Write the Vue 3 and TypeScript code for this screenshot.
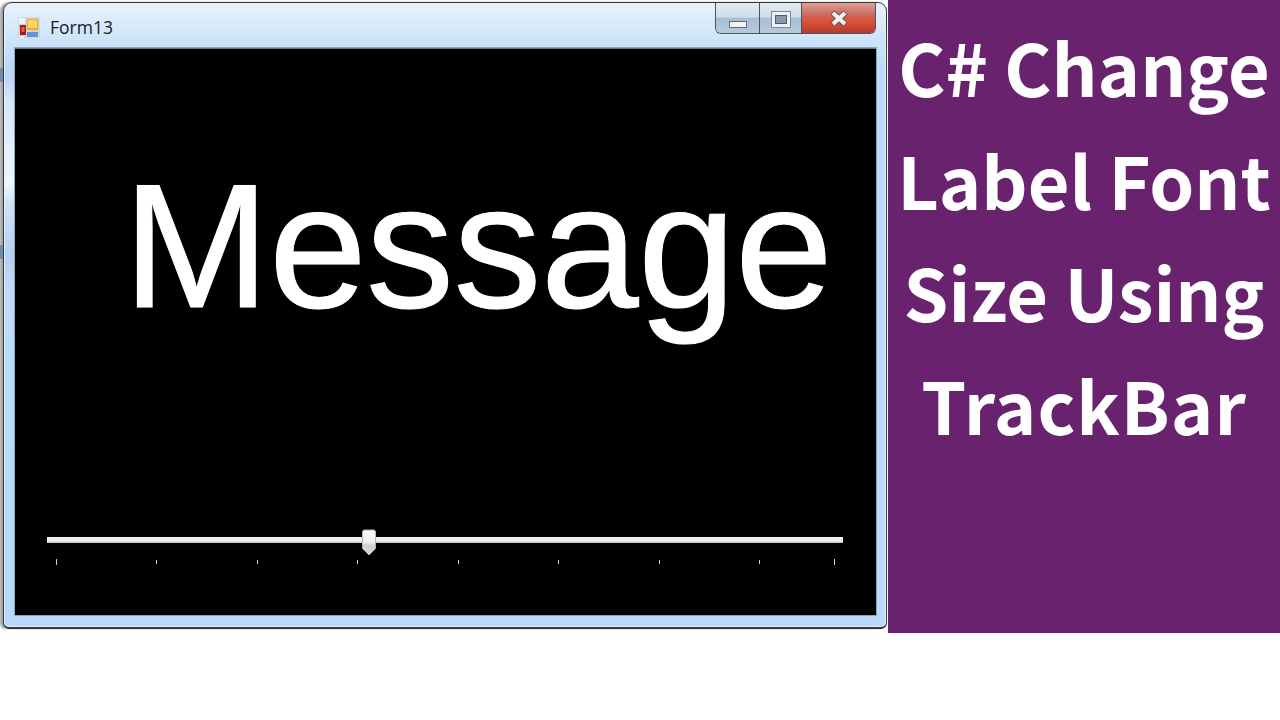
<script setup lang="ts">
const ticks: number[] = [0, 1, 2, 3, 4, 5, 6, 7]
const lines: string[] = ['C# Change', 'Label Font', 'Size Using', 'TrackBar']
</script>

<template>
  <div class="page">
    <span class="desk-bit bit-a"></span>
    <span class="desk-bit bit-b"></span>
    <div class="window">
      <div class="titlebar">
        <div class="title">
          <svg class="app-icon" width="22" height="21" viewBox="0 0 22 21">
            <rect x="0" y="0" width="22" height="21" fill="#d3d6d8" />
            <rect x="1" y="1" width="6" height="6" fill="#eef3fa" />
            <rect x="2" y="8" width="6" height="10" fill="#a81a1a" />
            <rect x="3.5" y="10" width="3" height="5" fill="#e0604c" />
            <rect x="9" y="2" width="11" height="11" fill="#e8ac22" />
            <rect x="10" y="3" width="9" height="8" fill="#fbd564" />
            <rect x="9" y="15" width="11" height="5" fill="#5f93da" />
            <rect x="2" y="19" width="4" height="2" fill="#f4f4f4" />
          </svg>
          <span class="caption">Form13</span>
        </div>
        <div class="controls">
          <div class="btn min"><span class="min-glyph"></span></div>
          <div class="btn max"><span class="max-glyph"></span></div>
          <div class="btn close">
            <svg width="20" height="17" viewBox="0 0 20 17">
              <path d="M3.5 2.5 L16.5 14.5 M16.5 2.5 L3.5 14.5" stroke="#6b5650" stroke-width="6" />
              <path d="M4 3 L16 14 M16 3 L4 14" stroke="#f2f2f2" stroke-width="4" />
            </svg>
          </div>
        </div>
      </div>
      <div class="client">
        <div class="message">Message</div>
        <div class="trackbar">
          <div class="track">
            <svg class="thumb" width="16" height="27" viewBox="0 0 16 27">
              <defs>
                <linearGradient id="thumbFill" x1="0" y1="0" x2="0" y2="1">
                  <stop offset="0" stop-color="#fafafa" />
                  <stop offset="0.5" stop-color="#eeeeee" />
                  <stop offset="0.6" stop-color="#d0d0d0" />
                  <stop offset="1" stop-color="#d8d8d8" />
                </linearGradient>
              </defs>
              <path d="M1.5 3 Q1.5 1 3.5 1 H12.5 Q14.5 1 14.5 3 V19.5 L8 26 L1.5 19.5 Z" fill="url(#thumbFill)" stroke="#b4b4b4" stroke-width="1" />
            </svg>
          </div>
          <div class="ticks">
            <div class="tick-group">
              <span v-for="t in ticks" :key="t" class="tick" :class="{ long: t === 0 }"></span>
            </div>
            <span class="tick long"></span>
          </div>
        </div>
      </div>
    </div>
    <div class="panel">
      <div v-for="l in lines" :key="l" class="panel-line">{{ l }}</div>
    </div>
  </div>
</template>

<style scoped>
.page {
  position: relative;
  display: flex;
  align-items: flex-start;
  width: 1280px;
  height: 720px;
  background: #fff;
  overflow: hidden;
}
.desk-bit {
  position: absolute;
  left: 0;
  width: 3px;
  height: 14px;
  background: #6d8db8;
  z-index: 1;
}
.bit-a {
  top: 68px;
}
.bit-b {
  top: 245px;
}
.window {
  box-sizing: border-box;
  width: 884px;
  height: 627px;
  margin: 2px 0 0 3px;
  padding: 0 10px 12px 11px;
  border: 1px solid #33383d;
  border-bottom-width: 2px;
  border-radius: 9px 9px 6px 6px;
  background:
    linear-gradient(180deg, rgba(190, 215, 245, 0) 55px, #bcd4f4 75px, #d4e6fa 100px, #f0f7fe 180px, #cfe3fa 200px, #b4d0f2 250px, #c2dcf8 290px, rgba(190, 220, 250, 0) 340px) left top / 11px 100% no-repeat,
    linear-gradient(180deg, #e9f2fb 0, #d8e9fa 24px, #c6e0f9 47px, #bcdcfb 60px, #b9d9fb 100%);
  box-shadow: inset 0 0 0 1px #e6f1fb, -3px 0 2px rgba(90, 90, 90, 0.55);
  display: flex;
  flex-direction: column;
}
.titlebar {
  height: 45px;
  flex: none;
  display: flex;
  justify-content: space-between;
  align-items: flex-start;
}
.title {
  display: flex;
  align-items: center;
  gap: 10px;
  padding: 12px 0 0 3px;
}
.app-icon {
  flex: none;
}
.caption {
  font-family: "Open Sans", "Noto Sans", sans-serif;
  font-size: 17.5px;
  color: #14202c;
}
.controls {
  display: flex;
  height: 30px;
  border: 1px solid #4a5560;
  border-top: 0;
  border-radius: 0 0 6px 6px;
  overflow: hidden;
}
.btn {
  display: flex;
  align-items: center;
  justify-content: center;
  box-sizing: border-box;
}
.min,
.max {
  background: linear-gradient(180deg, #e2e9f1 0, #d2deea 45%, #a9bed6 52%, #b6c9dd 100%);
  border-right: 1px solid #4a5560;
}
.min {
  width: 44px;
}
.max {
  width: 42px;
}
.close {
  width: 73px;
  background: linear-gradient(180deg, #df9f95 0, #c9695c 40%, #dc5638 58%, #b53a2e 100%);
}
.min-glyph {
  display: block;
  box-sizing: border-box;
  width: 18px;
  height: 7px;
  margin-top: 13px;
  background: #f2f2f2;
  border: 1px solid #5f6b78;
}
.max-glyph {
  display: block;
  box-sizing: border-box;
  width: 18px;
  height: 15px;
  margin-top: 3px;
  background: #8a97a6;
  border: 3px solid #eef2f6;
  box-shadow: inset 0 0 0 1px #4e5a68, 0 0 0 1px #7d8a99;
}
.client {
  flex: 1;
  min-height: 0;
  background: #000;
  border-top: 1px solid #6b7a88;
  box-shadow: 0 0 0 1px #8fa4b8;
  display: flex;
  flex-direction: column;
}
.message {
  font-family: "Liberation Sans", Arial, sans-serif;
  font-size: 176px;
  line-height: 200px;
  letter-spacing: -0.7px;
  color: #fff;
  margin: 97px 0 0 108px;
  white-space: nowrap;
  -webkit-text-stroke: 1px #fff;
  text-shadow: 0 0 1px #7fb2ff;
}
.trackbar {
  margin: 191px 0 0 32px;
  width: 796px;
}
.track {
  position: relative;
  height: 6px;
  box-sizing: border-box;
  background: linear-gradient(180deg, #f4f4f4 0, #efefef 60%, #c0c0c0 100%);
}
.thumb {
  position: absolute;
  left: 314px;
  top: -8px;
}
.ticks {
  display: flex;
  justify-content: space-between;
  align-items: center;
  height: 6px;
  margin: 16px 8px 0 9px;
}
.tick-group {
  display: flex;
  align-items: center;
  gap: 99.43px;
}
.tick {
  display: block;
  flex: none;
  width: 1px;
  height: 4px;
  background: #d0d0d0;
}
.tick.long {
  height: 6px;
}
.panel {
  width: 392px;
  height: 633px;
  margin-left: 1px;
  box-sizing: border-box;
  padding-top: 10px;
  background: #68226e;
  text-align: center;
}
.panel-line {
  font-family: "Noto Sans CJK SC", "Noto Sans", sans-serif;
  font-weight: 700;
  font-size: 72px;
  line-height: 112.5px;
  color: #fff;
  white-space: nowrap;
}
.panel-line:last-child {
  letter-spacing: 1px;
}
</style>
